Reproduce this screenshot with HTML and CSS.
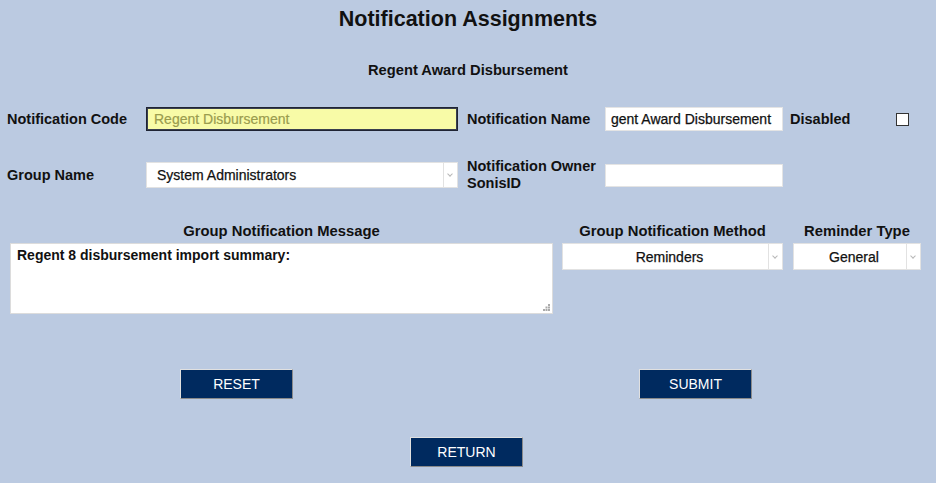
FILE: index.html
```html
<!DOCTYPE html>
<html lang="en">
<head>
    <meta charset="UTF-8">
    <meta name="viewport" content="width=device-width, initial-scale=1.0">
    <title>Notification Assignments</title>
    <link rel="stylesheet" href="styles.css">
</head>
<body>
    <div class="page">
        <h1 class="page-title">Notification Assignments</h1>
        <h2 class="sub-title">Regent Award Disbursement</h2>

        <!-- Top fields -->
        <div class="form-grid">
            <label class="field-label" for="notif-code">Notification Code</label>
            <div class="cell-wide">
                <input type="text" id="notif-code" class="input-field code-field" value="Regent Disbursement" readonly>
            </div>
            <label class="field-label" for="notif-name">Notification Name</label>
            <div class="cell-mid">
                <input type="text" id="notif-name" class="input-field" value="gent Award Disbursement">
            </div>
            <label class="field-label" for="disabled">Disabled</label>
            <div class="cell-check">
                <input type="checkbox" id="disabled" class="check-box">
            </div>

            <label class="field-label" for="group-name">Group Name</label>
            <div class="cell-wide">
                <div class="select-box">
                    <select id="group-name" class="select-field">
                        <option>System Administrators</option>
                    </select>
                    <span class="select-arrow"></span>
                </div>
            </div>
            <label class="field-label" for="owner-id">Notification Owner SonisID</label>
            <div class="cell-mid">
                <input type="text" id="owner-id" class="input-field owner-field">
            </div>
        </div>

        <!-- Message and method -->
        <div class="message-row">
            <div class="message-group">
                <div class="col-title">Group Notification Message</div>
                <div class="text-box">
                    <textarea class="message-area">Regent 8 disbursement import summary:</textarea>
                    <svg class="grip" width="7" height="7" viewBox="0 0 7 7">
                        <rect x="5" y="0" width="2" height="2" fill="#aaa"/>
                        <rect x="2.5" y="2.5" width="2" height="2" fill="#aaa"/>
                        <rect x="5" y="2.5" width="2" height="2" fill="#aaa"/>
                        <rect x="0" y="5" width="2" height="2" fill="#aaa"/>
                        <rect x="2.5" y="5" width="2" height="2" fill="#aaa"/>
                        <rect x="5" y="5" width="2" height="2" fill="#aaa"/>
                    </svg>
                </div>
            </div>
            <div class="method-group">
                <div class="col-title">Group Notification Method</div>
                <div class="select-box">
                    <select class="select-field centered">
                        <option>Reminders</option>
                    </select>
                    <span class="select-arrow"></span>
                </div>
            </div>
            <div class="type-group">
                <div class="col-title">Reminder Type</div>
                <div class="select-box">
                    <select class="select-field centered">
                        <option>General</option>
                    </select>
                    <span class="select-arrow"></span>
                </div>
            </div>
        </div>

        <!-- Buttons -->
        <div class="button-row">
            <button type="button" class="nav-btn">RESET</button>
            <button type="button" class="nav-btn">SUBMIT</button>
        </div>
        <div class="return-row">
            <button type="button" class="nav-btn">RETURN</button>
        </div>
    </div>
</body>
</html>
```

FILE: styles.css
```css
* {
    margin: 0;
    padding: 0;
    box-sizing: border-box;
}

body {
    font-family: 'Liberation Sans', Arial, sans-serif;
    background: #BBCAE1;
    color: #111;
    width: 936px;
    height: 483px;
    overflow: hidden;
}

.page {
    padding-top: 7px;
}

.page-title {
    text-align: center;
    font-size: 21.5px;
    font-weight: bold;
    line-height: 25px;
}

.sub-title {
    text-align: center;
    font-size: 14.7px;
    font-weight: bold;
    line-height: 18px;
    margin-top: 29px;
}

/* top two rows */
.form-grid {
    display: grid;
    grid-template-columns: 146px 321px 138px 185px 106px auto;
    grid-template-rows: 24px 26px;
    row-gap: 31px;
    align-items: center;
    margin-top: 28px;
}

.field-label {
    font-size: 14.5px;
    font-weight: bold;
    line-height: 17px;
}

.form-grid > .field-label:first-child,
.form-grid > .field-label:nth-child(7) {
    padding-left: 7px;
}

.cell-wide {
    width: 312px;
}

.cell-mid {
    width: 178px;
}

.input-field {
    width: 100%;
    height: 24px;
    font-family: 'Liberation Sans', Arial, sans-serif;
    font-size: 14px;
    color: #111;
    -webkit-text-stroke: 0.25px #111;
    background: #ffffff;
    border: 1px solid #e4e4e4;
    padding: 0 5px;
    outline: none;
}

.code-field {
    background: #F8FBA7;
    border: 1px solid #1f2433;
    box-shadow: inset 0 0 0 1px #3a3f4f;
    color: #9A9C4E;
    -webkit-text-stroke: 0.2px #9A9C4E;
    padding: 0 7px;
}

.owner-field {
    height: 23px;
}

.check-box {
    appearance: none;
    display: block;
    width: 13px;
    height: 13px;
    background: #ffffff;
    border: 1px solid #333;
}

/* selects */
.select-box {
    position: relative;
    width: 100%;
}

.select-field {
    appearance: none;
    width: 100%;
    height: 26px;
    font-family: 'Liberation Sans', Arial, sans-serif;
    font-size: 14px;
    color: #111;
    -webkit-text-stroke: 0.25px #111;
    background: #ffffff;
    border: 1px solid #e2e2e2;
    padding: 0 16px 0 10px;
    outline: none;
}

.select-field.centered {
    text-align: center;
    text-align-last: center;
    height: 27px;
}

.select-arrow {
    position: absolute;
    top: 1px;
    right: 1px;
    bottom: 1px;
    width: 14px;
    border-left: 1px solid #e2e2e2;
}

.select-arrow::after {
    content: "";
    position: absolute;
    left: 4px;
    top: 50%;
    width: 3px;
    height: 3px;
    margin-top: -3px;
    border-right: 1px solid #b8b8b8;
    border-bottom: 1px solid #b8b8b8;
    transform: rotate(45deg);
}

/* message row */
.message-row {
    display: flex;
    align-items: flex-start;
    margin-top: 35px;
}

.col-title {
    text-align: center;
    font-size: 14.8px;
    font-weight: bold;
    line-height: 17px;
    margin-bottom: 3px;
}

.message-group {
    width: 543px;
    margin-left: 10px;
}

.method-group {
    width: 221px;
    margin-left: 9px;
}

.type-group {
    width: 128px;
    margin-left: 10px;
}

.text-box {
    position: relative;
}

.message-area {
    display: block;
    width: 100%;
    height: 71px;
    font-family: 'Liberation Sans', Arial, sans-serif;
    font-size: 14px;
    font-weight: bold;
    color: #111;
    background: #ffffff;
    border: 1px solid #dcdcdc;
    padding: 3px 6px;
    resize: none;
    outline: none;
}

.grip {
    position: absolute;
    right: 3px;
    bottom: 3px;
}

/* buttons */
.button-row {
    display: flex;
    justify-content: space-between;
    padding: 0 184px 0 180px;
    margin-top: 55px;
}

.return-row {
    display: flex;
    justify-content: center;
    padding-right: 3px;
    margin-top: 38px;
}

.nav-btn {
    width: 113px;
    height: 30px;
    background: #002A5F;
    color: #ffffff;
    font-family: 'Liberation Sans', Arial, sans-serif;
    font-size: 14px;
    border: 1px solid;
    border-color: #e0e0e0 #8a8a8a #8a8a8a #e0e0e0;
    cursor: pointer;
}
```
